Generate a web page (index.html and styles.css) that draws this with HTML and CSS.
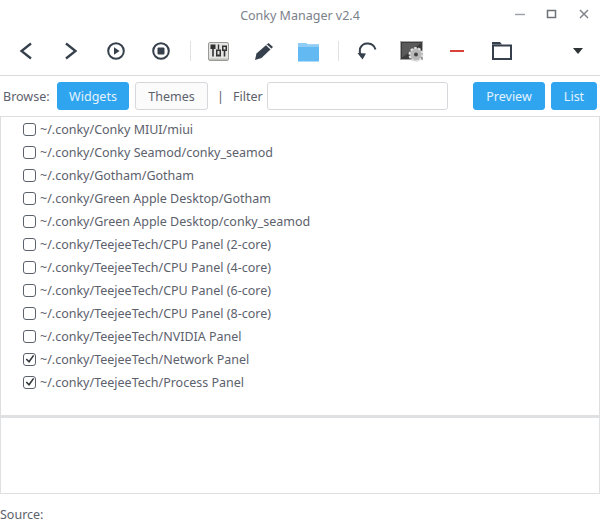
FILE: index.html
```html
<!DOCTYPE html>
<html lang="en">
<head>
<meta charset="utf-8">
<title>Conky Manager v2.4</title>
<link rel="stylesheet" href="styles.css">
</head>
<body>
<div class="window">
  <header class="titlebar">
    <div class="title">Conky Manager v2.4</div>
    <div class="controls">
      <svg class="wc" viewBox="0 0 12 12"><path d="M1 6.500h10" stroke="#9a9fa6" stroke-width="1.400"/></svg>
      <svg class="wc" viewBox="0 0 12 12"><rect x="1.500" y="2.500" width="8" height="7" fill="none" stroke="#6d7278" stroke-width="1.500"/></svg>
      <svg class="wc" viewBox="0 0 12 12"><path d="M2 2l8 8M10 2l-8 8" stroke="#80858b" stroke-width="1.500"/></svg>
    </div>
  </header>
  <nav class="toolbar">
    <span class="tool"><svg viewBox="0 0 24 24"><path d="M17 4.500L7.500 12l9.500 7.500" class="ln"/></svg></span>
    <span class="tool"><svg viewBox="0 0 24 24"><path d="M7 4.500l9.500 7.500L7 19.500" class="ln"/></svg></span>
    <span class="tool"><svg viewBox="0 0 24 24"><circle cx="12" cy="12" r="7.800" class="ln thin"/><path d="M10 8.200l5.600 3.800-5.600 3.800z" fill="#36404c"/></svg></span>
    <span class="tool"><svg viewBox="0 0 24 24"><circle cx="12" cy="12" r="7.800" class="ln thin"/><rect x="8.500" y="8.500" width="7" height="7" rx="1" fill="#36404c"/></svg></span>
    <span class="sep"></span>
    <span class="tool"><svg viewBox="0 0 24 24">
      <rect x="1.500" y="3.500" width="20" height="18" rx="1.500" fill="#e4e4e2" stroke="#9a9a97"/>
      <rect x="2" y="19.500" width="19" height="1.500" fill="#bdbdba"/>
      <rect x="3.500" y="5.500" width="5" height="4.500" fill="#333"/>
      <rect x="5.200" y="9.500" width="1.600" height="8" fill="#333"/>
      <rect x="10.800" y="5.500" width="1.400" height="5" fill="#333"/>
      <rect x="9" y="10.500" width="5" height="7" fill="#333"/>
      <rect x="10.500" y="12" width="2" height="3.500" fill="#e4e4e2"/>
      <rect x="15" y="6.500" width="5" height="5.500" fill="#333"/>
      <rect x="16.500" y="8" width="2" height="2.500" fill="#e4e4e2"/>
      <rect x="16.700" y="11.500" width="1.600" height="6" fill="#333"/>
    </svg></span>
    <span class="tool"><svg viewBox="0 0 24 24">
      <path d="M16.500 4l4.500 4L9.500 19l-6.500 2 1.500-6.500z" fill="#36404c"/>
      <path d="M14.500 6l4.500 4" stroke="#fff" stroke-width="1.100"/>
    </svg></span>
    <span class="tool"><svg viewBox="0 0 24 24"><path d="M1 4h8l1.500 1.500H22v17H1z" fill="#63baf3"/><path d="M1 4h8l1.500 1.500H22V8H1z" fill="#8fcdf6"/></svg></span>
    <span class="sep"></span>
    <span class="tool"><svg viewBox="0 0 24 24"><path d="M20.500 10.500A8.200 8.200 0 0 0 5 9.500c-.7 2.800-.2 5.300 1 7.500" class="ln thin"/><path d="M2.500 14l5 6.500 3.500-6z" fill="#36404c"/></svg></span>
    <span class="tool"><svg viewBox="0 0 24 24">
      <rect x=".5" y="2.500" width="22" height="18" fill="#3c3c3c" stroke="#a8a8a8"/>
      <path d="M2 4h19L3 18H2z" fill="#5a5a5a"/>
      <circle cx="16" cy="15.500" r="6.500" fill="#b8b8b8" stroke="#e2e2e2" stroke-width="2" stroke-dasharray="2.500 1.500"/>
      <circle cx="16" cy="15.500" r="2" fill="#444"/>
    </svg></span>
    <span class="tool"><svg viewBox="0 0 24 24"><rect x="5" y="11" width="14" height="2" fill="#d9423a"/></svg></span>
    <span class="tool"><svg viewBox="0 0 24 24"><path d="M2 3h8l2 2.500H2z" fill="#36404c"/><rect x="3" y="6.500" width="18" height="13.500" fill="none" stroke="#36404c" stroke-width="2"/></svg></span>
    <span class="spacer"></span>
    <svg class="caret" viewBox="0 0 10 6"><path d="M0 0h10L5 6z" fill="#2e3436"/></svg>
  </nav>
  <div class="filterbar">
    <span class="label browse">Browse:</span>
    <button class="btn primary widgets">Widgets</button>
    <button class="btn themes">Themes</button>
    <span class="label bar">|</span>
    <span class="label filter">Filter</span>
    <input class="search" type="text">
    <button class="btn primary preview">Preview</button>
    <button class="btn primary list-btn">List</button>
  </div>
  <main class="list">
    <label class="row"><span class="cb"></span>~/.conky/Conky MIUI/miui</label>
    <label class="row"><span class="cb"></span>~/.conky/Conky Seamod/conky_seamod</label>
    <label class="row"><span class="cb"></span>~/.conky/Gotham/Gotham</label>
    <label class="row"><span class="cb"></span>~/.conky/Green Apple Desktop/Gotham</label>
    <label class="row"><span class="cb"></span>~/.conky/Green Apple Desktop/conky_seamod</label>
    <label class="row"><span class="cb"></span>~/.conky/TeejeeTech/CPU Panel (2-core)</label>
    <label class="row"><span class="cb"></span>~/.conky/TeejeeTech/CPU Panel (4-core)</label>
    <label class="row"><span class="cb"></span>~/.conky/TeejeeTech/CPU Panel (6-core)</label>
    <label class="row"><span class="cb"></span>~/.conky/TeejeeTech/CPU Panel (8-core)</label>
    <label class="row"><span class="cb"></span>~/.conky/TeejeeTech/NVIDIA Panel</label>
    <label class="row"><span class="cb"><svg viewBox="0 0 12 12"><path d="M2.500 5.500l3 3 5-7" fill="none" stroke="#2e3436" stroke-width="1.700"/></svg></span>~/.conky/TeejeeTech/Network Panel</label>
    <label class="row"><span class="cb"><svg viewBox="0 0 12 12"><path d="M2.500 5.500l3 3 5-7" fill="none" stroke="#2e3436" stroke-width="1.700"/></svg></span>~/.conky/TeejeeTech/Process Panel</label>
  </main>
  <section class="details"></section>
  <footer class="source">Source:</footer>
</div>
</body>
</html>
```
FILE: styles.css
```css
* { box-sizing: border-box; }
html, body { margin: 0; padding: 0; }
body {
  width: 600px;
  height: 528px;
  overflow: hidden;
  background: #fff;
  font-family: "Noto Sans", sans-serif;
  font-size: 12.5px;
  color: #5c616c;
}
.window { display: flex; flex-direction: column; height: 528px; }
.titlebar {
  height: 30px;
  display: flex;
  align-items: center;
  justify-content: center;
  position: relative;
}
.title { color: #7b818b; }
.controls {
  position: absolute;
  right: 10px;
  top: 8px;
  display: flex;
  gap: 20px;
}
.wc { width: 12px; height: 12px; display: block; }
.toolbar {
  height: 46px;
  padding: 0 12px 3px 3.500px;
  display: flex;
  align-items: center;
  border-bottom: 1px solid #d8dadd;
}
.tool { width: 45px; height: 24px; display: flex; justify-content: center; }
.tool svg { width: 24px; height: 24px; display: block; }
.ln { fill: none; stroke: #36404c; stroke-width: 2.300; }
.thin { stroke-width: 2; }
.sep {
  width: 1px;
  height: 20px;
  margin: 0 6px;
  background: #e0e2e4;
}
.spacer { flex: 1; }
.caret { width: 10px; height: 6px; display: block; margin-right: 5px; }
.filterbar {
  height: 40px;
  padding: 6px 3px 0 3px;
  display: flex;
  align-items: flex-start;
}
.label { line-height: 30px; }
.browse { width: 48px; }
.btn {
  height: 28px;
  padding: 1px 0 0;
  border-radius: 3px;
  font: inherit;
  color: #5c616c;
  background: #fbfbfc;
  border: 1px solid #d5d7da;
}
.btn.primary { background: #2fa5f0; border-color: #2fa5f0; color: #e3f3fd; }
.widgets { width: 72px; margin-left: 6px; }
.themes { width: 73px; margin-left: 6px; }
.bar { width: 7px; margin-left: 9px; }
.filter { width: 28px; margin-left: 9px; }
.search {
  width: 181px;
  height: 28px;
  margin-left: 6px;
  border: 1px solid #d5d7da;
  border-radius: 3px;
  background: #fff;
}
.preview { width: 72px; margin-left: 25px; }
.list-btn { width: 46px; margin-left: 6px; }
.list {
  height: 299px;
  padding: 1px 0 0 22px;
  border-left: 1px solid #dcdee0;
  border-right: 1px solid #dcdee0;
  border-top: 1px solid #dcdee0;
}
.row {
  height: 23px;
  display: flex;
  align-items: center;
  white-space: nowrap;
}
.cb {
  width: 13px;
  height: 13px;
  margin-right: 4px;
  border: 1px solid #5c616c;
  border-radius: 3px;
  background: #fff;
  flex: none;
}
.cb svg { width: 11px; height: 11px; display: block; }
.details {
  height: 79px;
  border: 1px solid #dfe0e2;
  border-top: 3px solid #dfe0e2;
}
.source { height: 34px; padding-top: 12px; line-height: 18px; }
```
